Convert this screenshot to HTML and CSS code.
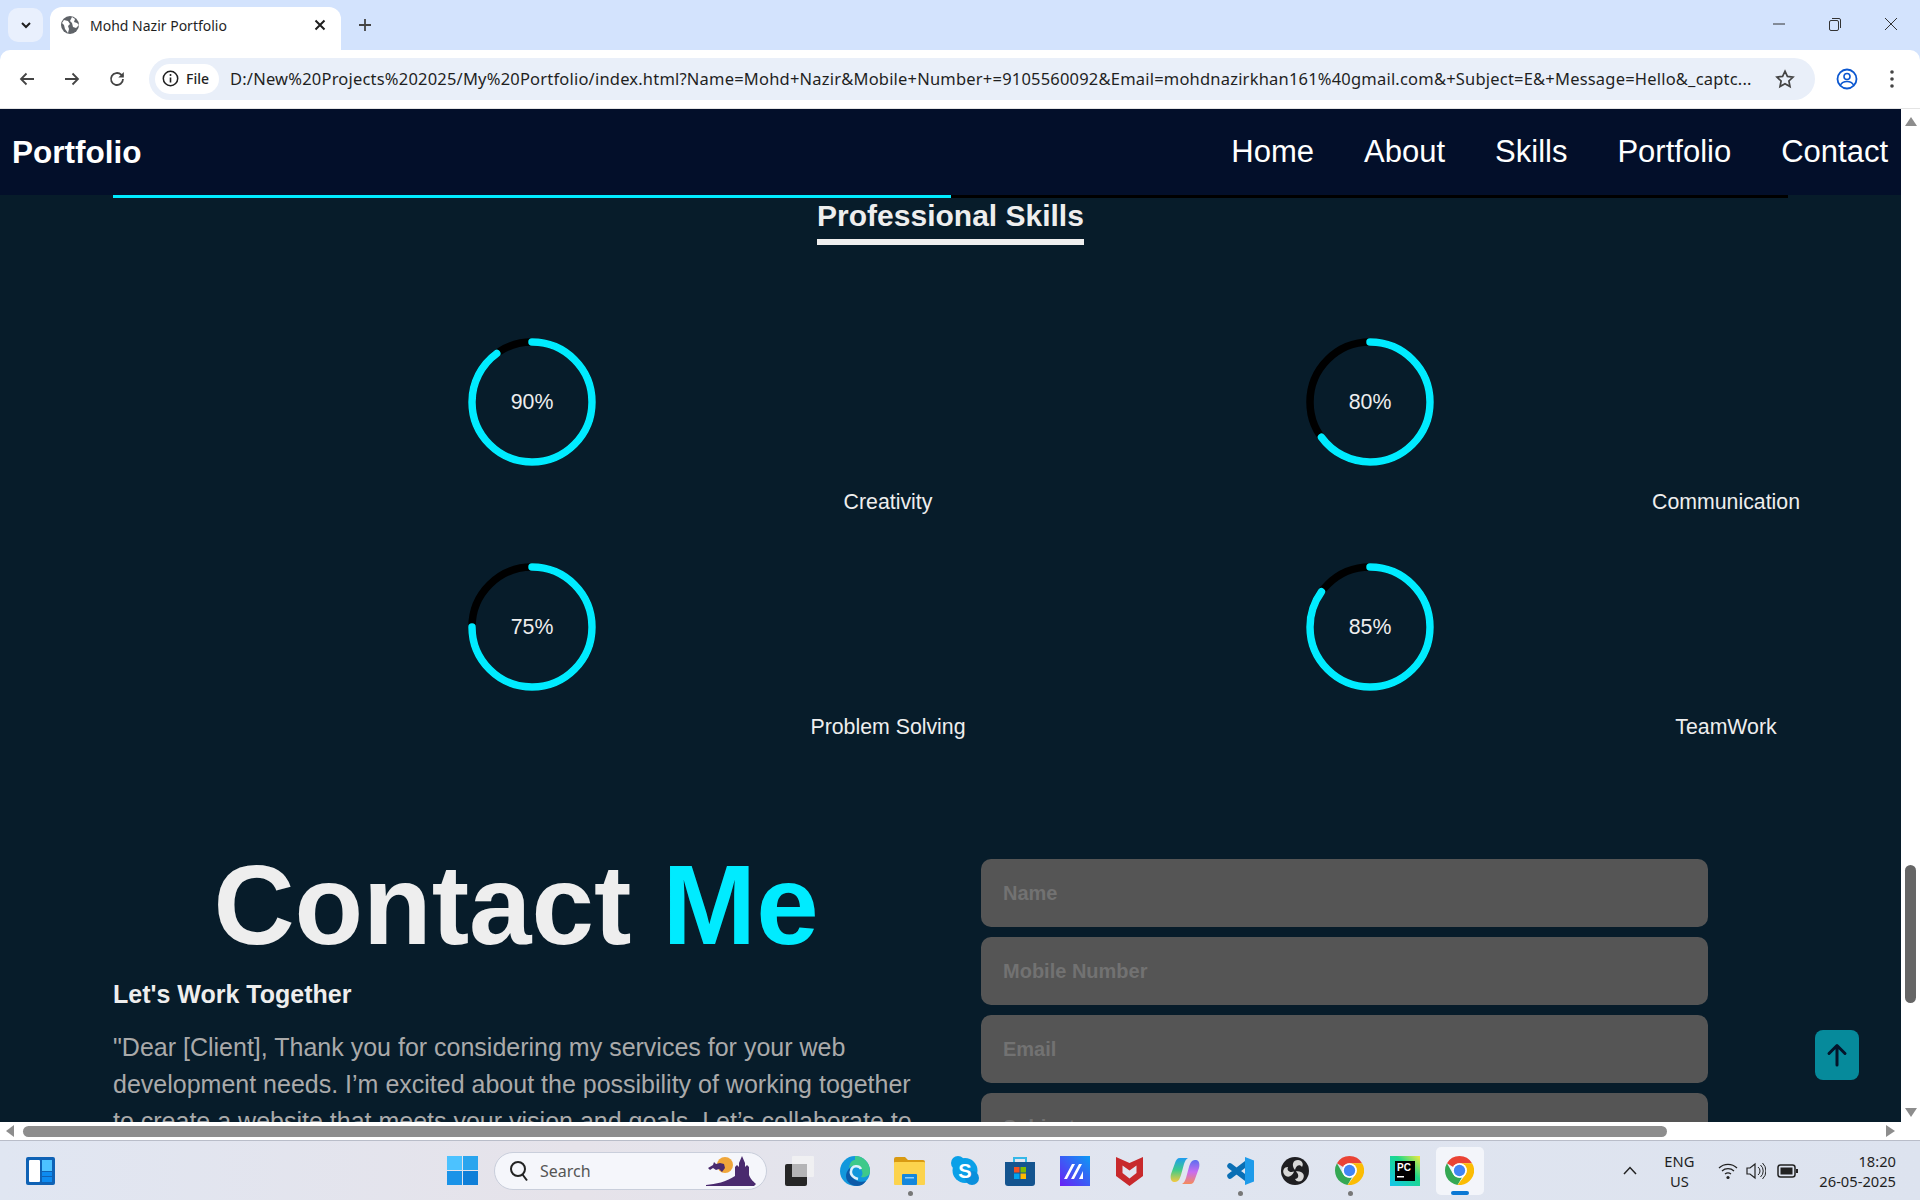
FILE: index.html
```html
<!DOCTYPE html>
<html lang="en">
<head>
    <meta charset="UTF-8">
    <title>Mohd Nazir Portfolio</title>
    <link rel="stylesheet" href="styles.css">
</head>
<body>
    <svg class="defs" width="0" height="0">
        <symbol id="chrome" viewBox="0 0 24 24">
            <path fill="#ea4335" d="M12 0A12 12 0 0 1 22.39 6H12A6 6 0 0 0 6.8 9L1.61 6A12 12 0 0 1 12 0Z"/>
            <path fill="#34a853" d="M1.61 6L6.8 15A6 6 0 0 0 14 17.7L10.4 23.9A12 12 0 0 1 1.61 6Z"/>
            <path fill="#fbbc04" d="M22.39 6H12A6 6 0 0 1 17.2 15L10.4 23.9A12 12 0 0 0 22.39 6Z"/>
            <circle cx="12" cy="12" r="6" fill="#fff"/>
            <circle cx="12" cy="12" r="4.7" fill="#4285f4"/>
        </symbol>
    </svg>

    <!-- browser tabs -->
    <div class="tabstrip">
        <div class="tab-menu">
            <svg width="14" height="14" viewBox="0 0 14 14"><path d="M3 5l4 4 4-4" fill="none" stroke="#1f1f1f" stroke-width="2"/></svg>
        </div>
        <div class="tab">
            <svg width="20" height="20" viewBox="0 0 20 20"><circle cx="10" cy="10" r="9" fill="#5f6368"/><path d="M4 5l4 1 2 3-2 2 1 3-1 4-3-4-1-4-2-2zM12 2l3 2-1 3 3 1 2 2-3 3-3-1-1-4-2-2z" fill="#fff"/></svg>
            <span class="tab-title">Mohd Nazir Portfolio</span>
            <svg class="tab-close" width="14" height="14" viewBox="0 0 14 14"><path d="M2.5 2.5l9 9M11.5 2.5l-9 9" stroke="#1f1f1f" stroke-width="2"/></svg>
        </div>
        <svg class="tab-new" width="16" height="16" viewBox="0 0 16 16"><path d="M8 2v12M2 8h12" stroke="#444" stroke-width="1.8"/></svg>
        <div class="win-controls">
            <svg width="14" height="14" viewBox="0 0 14 14"><path d="M1 7h12" stroke="#333" stroke-width="1"/></svg>
            <svg width="14" height="14" viewBox="0 0 14 14"><rect x="1.5" y="3.5" width="9" height="10" rx="1.5" fill="none" stroke="#333"/><path d="M4 1.5h7a1.5 1.5 0 0 1 1.5 1.5v8" fill="none" stroke="#333"/></svg>
            <svg width="14" height="14" viewBox="0 0 14 14"><path d="M1 1l12 12M13 1L1 13" stroke="#333" stroke-width="1"/></svg>
        </div>
    </div>

    <!-- address bar -->
    <div class="toolbar">
        <svg class="tool tool-back" width="18" height="18" viewBox="0 0 18 18"><path d="M16 9H3M8.500 3.500L3 9l5.500 5.500" fill="none" stroke="#444" stroke-width="1.800"/></svg>
        <svg class="tool tool-fwd" width="18" height="18" viewBox="0 0 18 18"><path d="M2 9h13M9.500 3.500L15 9l-5.500 5.500" fill="none" stroke="#444" stroke-width="1.800"/></svg>
        <svg class="tool tool-reload" width="18" height="18" viewBox="0 0 18 18"><path d="M15 9a6 6 0 1 1-1.800-4.300L15 6.500" fill="none" stroke="#444" stroke-width="1.800"/><path d="M15.800 2v5.500h-5.500z" fill="#444"/></svg>
        <div class="omnibox">
            <div class="chip">
                <svg width="17" height="17" viewBox="0 0 17 17"><circle cx="8.500" cy="8.500" r="7.200" fill="none" stroke="#1f1f1f" stroke-width="1.500"/><path d="M8.500 7.500v5" stroke="#1f1f1f" stroke-width="1.600"/><circle cx="8.500" cy="5" r="1" fill="#1f1f1f"/></svg>
                <span>File</span>
            </div>
            <span class="url">D:/New%20Projects%202025/My%20Portfolio/index.html?Name=Mohd+Nazir&amp;Mobile+Number+=9105560092&amp;Email=mohdnazirkhan161%40gmail.com&amp;+Subject=E&amp;+Message=Hello&amp;_captc...</span>
            <svg class="star" width="20" height="20" viewBox="0 0 20 20"><path d="M10 2.200l2.400 5.200 5.600.7-4.100 3.900 1.100 5.600-5-2.800-5 2.800 1.100-5.600L2 8.100l5.600-.7z" fill="none" stroke="#444" stroke-width="1.700"/></svg>
        </div>
        <svg class="tool-profile" width="22" height="22" viewBox="0 0 22 22"><circle cx="11" cy="11" r="9.500" fill="none" stroke="#0b57d0" stroke-width="1.800"/><circle cx="11" cy="8.500" r="3" fill="none" stroke="#0b57d0" stroke-width="1.600"/><path d="M4.500 17c1.500-3 3.500-3.500 6.500-3.500s5 .5 6.500 3.500" fill="none" stroke="#0b57d0" stroke-width="1.600"/></svg>
        <svg class="tool-more" width="6" height="20" viewBox="0 0 6 20"><circle cx="3" cy="3" r="1.800" fill="#444"/><circle cx="3" cy="10" r="1.800" fill="#444"/><circle cx="3" cy="17" r="1.800" fill="#444"/></svg>
    </div>

    <div class="viewport">
        <div class="page">
            <nav class="navbar">
                <a class="brand" href="#">Portfolio</a>
                <div class="nav-links">
                    <a href="#">Home</a>
                    <a href="#">About</a>
                    <a href="#">Skills</a>
                    <a href="#">Portfolio</a>
                    <a href="#">Contact</a>
                </div>
            </nav>

            <div class="skill-track"><div class="skill-fill"></div></div>

            <section class="skills">
                <div class="skills-head"><h2>Professional Skills</h2></div>
                <div class="skills-grid">
                    <div class="skill">
                        <div class="ring">
                            <svg width="128" height="128" viewBox="0 0 128 128"><circle class="ring-bg" cx="64" cy="64" r="60"/><circle class="ring-val" cx="64" cy="64" r="60" pathLength="100" stroke-dasharray="90 100"/></svg>
                            <span>90%</span>
                        </div>
                        <p>Creativity</p>
                    </div>
                    <div class="skill">
                        <div class="ring">
                            <svg width="128" height="128" viewBox="0 0 128 128"><circle class="ring-bg" cx="64" cy="64" r="60"/><circle class="ring-val" cx="64" cy="64" r="60" pathLength="100" stroke-dasharray="65 100"/></svg>
                            <span>80%</span>
                        </div>
                        <p>Communication</p>
                    </div>
                    <div class="skill">
                        <div class="ring">
                            <svg width="128" height="128" viewBox="0 0 128 128"><circle class="ring-bg" cx="64" cy="64" r="60"/><circle class="ring-val" cx="64" cy="64" r="60" pathLength="100" stroke-dasharray="75 100"/></svg>
                            <span>75%</span>
                        </div>
                        <p>Problem Solving</p>
                    </div>
                    <div class="skill">
                        <div class="ring">
                            <svg width="128" height="128" viewBox="0 0 128 128"><circle class="ring-bg" cx="64" cy="64" r="60"/><circle class="ring-val" cx="64" cy="64" r="60" pathLength="100" stroke-dasharray="85 100"/></svg>
                            <span>85%</span>
                        </div>
                        <p>TeamWork</p>
                    </div>
                </div>
            </section>

            <section class="contact">
                <div class="contact-text">
                    <h1>Contact <span>Me</span></h1>
                    <h3>Let's Work Together</h3>
                    <p>"Dear [Client], Thank you for considering my services for your web development needs. I’m excited about the possibility of working together to create a website that meets your vision and goals. Let’s collaborate to</p>
                </div>
                <form class="contact-form">
                    <input type="text" placeholder="Name">
                    <input type="text" placeholder="Mobile Number">
                    <input type="text" placeholder="Email">
                    <input type="text" placeholder="Subject">
                </form>
            </section>

            <a class="to-top" href="#">
                <svg width="22" height="24" viewBox="0 0 22 24"><path d="M11 22V3M3 10.500L11 2.500l8 8" fill="none" stroke="#04142a" stroke-width="3" stroke-linecap="round" stroke-linejoin="round"/></svg>
            </a>
        </div>
        <div class="vscroll">
            <i class="arrow-up"></i>
            <div class="vscroll-track"><div class="vscroll-thumb"></div></div>
            <i class="arrow-down"></i>
        </div>
    </div>

    <div class="hscroll">
        <i class="arrow-left"></i>
        <div class="hscroll-thumb"></div>
        <i class="arrow-right"></i>
    </div>

    <!-- windows taskbar -->
    <footer class="taskbar">
        <svg class="widgets" width="29" height="28" viewBox="0 0 29 28"><rect width="29" height="28" rx="2" fill="#0f62b5"/><rect x="3" y="3" width="11" height="22" rx="1" fill="#fff"/><rect x="16" y="3" width="10" height="11" fill="#4cc2ff"/><rect x="16" y="15" width="10" height="4" fill="#0d8bf0"/><rect x="16" y="20" width="10" height="5" fill="#0d8bf0"/></svg>

        <div class="task-center">
            <div class="slot">
                <svg width="31" height="29" viewBox="0 0 31 29"><rect width="15" height="14" fill="#4cc2ff"/><rect x="16" width="15" height="14" fill="#2aa5ee"/><rect y="15" width="15" height="14" fill="#1a93e8"/><rect x="16" y="15" width="15" height="14" fill="#0f7fd8"/></svg>
            </div>
            <div class="search">
                <svg width="20" height="22" viewBox="0 0 20 22"><circle cx="9" cy="9" r="7" fill="none" stroke="#222" stroke-width="2"/><path d="M13.500 14.500l4.500 6" stroke="#222" stroke-width="2"/></svg>
                <span>Search</span>
                <svg width="50" height="31" viewBox="0 0 50 31"><circle cx="19" cy="10" r="8" fill="#f0a63a"/><path d="M2 13l5-3 1-3 2 2 4-1 4 1 1 4-3 4-3-3-3 1-3-2-3 2z" fill="#4a2a6e"/><path d="M0 30C10 29 20 27 29 21V12l2-2 2 2V8l3-7 3 7v4l2-2 2 2v8C45 25 48 27 50 29l-2 2H0z" fill="#4a2a6e"/></svg>
            </div>
            <div class="slot">
                <svg width="30" height="30" viewBox="0 0 30 30"><rect y="8" width="22" height="22" rx="2" fill="#262626"/><rect x="7" width="22" height="21" rx="1" fill="#f0f0f2"/><rect x="7" y="8" width="15" height="13" fill="#b4b4b6"/></svg>
            </div>
            <div class="slot">
                <svg width="30" height="30" viewBox="0 0 30 30"><circle cx="15" cy="15" r="15" fill="#1297dc"/><path d="M15 0a15 15 0 0 1 15 15c0 5-5 7-9 6 2-2 2-5 0-8-3-4-9-4-12-1C10 6 12 4 15 4z" fill="#3ec98a"/><path d="M10 12C6 15 4 22 9 27c2 2 5 3 8 3 4 0 7-2 9-5-5 2-12 0-14-5-1-3-1-5-2-8z" fill="#0c5aa8"/><path d="M21 13c-2-4-9-4-10 2-1 4 3 7 7 8" fill="none" stroke="#dff1fb" stroke-width="2.500"/></svg>
            </div>
            <div class="slot">
                <svg width="31" height="28" viewBox="0 0 31 28"><path d="M0 2a2 2 0 0 1 2-2h9l3 3h15a2 2 0 0 1 2 2v3H0z" fill="#d99a12"/><rect y="5" width="31" height="23" rx="1" fill="#fcd34d"/><rect x="8" y="17" width="15" height="11" rx="1" fill="#1487dc"/><rect x="11" y="20" width="9" height="1.500" fill="#8fd0f7"/></svg>
                <i class="dot"></i>
            </div>
            <div class="slot">
                <svg width="28" height="29" viewBox="0 0 28 29"><circle cx="14" cy="14.500" r="12.500" fill="#0aa0e8"/><circle cx="7" cy="7" r="7" fill="#0aa0e8"/><circle cx="21" cy="22" r="7" fill="#0a8fdc"/><text x="14" y="22" class="skype-s">S</text></svg>
            </div>
            <div class="slot">
                <svg width="30" height="30" viewBox="0 0 30 30"><path d="M9 6V2h12v4" fill="none" stroke="#35b8e8" stroke-width="2"/><path d="M0 6h30v21a3 3 0 0 1-3 3H3a3 3 0 0 1-3-3z" fill="#14548f"/><rect x="9" y="11" width="5.500" height="5.500" fill="#f25022"/><rect x="15.500" y="11" width="5.500" height="5.500" fill="#7fba00"/><rect x="9" y="17.500" width="5.500" height="5.500" fill="#00a4ef"/><rect x="15.500" y="17.500" width="5.500" height="5.500" fill="#ffb900"/></svg>
            </div>
            <div class="slot">
                <svg width="30" height="30" viewBox="0 0 30 30"><defs><linearGradient id="mblue" x1="0" y1="1" x2="1" y2="0"><stop offset="0" stop-color="#6a1ff5"/><stop offset="1" stop-color="#0c9af5"/></linearGradient></defs><rect width="30" height="30" fill="url(#mblue)"/><path d="M4 23L12 8h3L7 23zM11 23L19 8h3L14 23zM19 23l4-8v8z" fill="#fff"/></svg>
            </div>
            <div class="slot">
                <svg width="27" height="30" viewBox="0 0 27 30"><path fill-rule="evenodd" d="M0 1L13.500 7 27 1V20L13.500 30 0 20ZM6.500 9.500L13.500 14.500 20.500 9.500V17L13.500 22.500 6.500 17Z" fill="#c8292c"/></svg>
            </div>
            <div class="slot">
                <svg width="30" height="30" viewBox="0 0 30 30"><defs><linearGradient id="copa" x1="0" y1="0" x2="0" y2="1"><stop offset="0" stop-color="#1f9cf0"/><stop offset=".5" stop-color="#3ecb8a"/><stop offset="1" stop-color="#f5c93f"/></linearGradient><linearGradient id="copb" x1="0" y1="0" x2="0" y2="1"><stop offset="0" stop-color="#5a6ef0"/><stop offset=".5" stop-color="#c86cf0"/><stop offset="1" stop-color="#f58a5a"/></linearGradient></defs><path d="M10 2h8c-2 1-3 3-4 6l-3 11c-1 3-2 7-6 7H4C1 26 0 22 1 18L5 7c1-3 2-5 5-5z" fill="url(#copa)"/><path d="M20 28h-8c2-1 3-3 4-6l3-11c1-3 2-7 6-7h1c3 0 4 4 3 8l-4 11c-1 3-2 5-5 5z" fill="url(#copb)"/></svg>
            </div>
            <div class="slot">
                <svg width="29" height="30" viewBox="0 0 29 30"><path d="M22 7L5 20M5 10l17 13" fill="none" stroke="#0a6fb5" stroke-width="5.500" stroke-linecap="round"/><path d="M20 1l9 3.500v21L20 29z" fill="#1e9bea"/></svg>
                <i class="dot"></i>
            </div>
            <div class="slot">
                <svg width="28" height="30" viewBox="0 0 28 30"><circle cx="14" cy="15" r="14" fill="#1f1f22"/><g fill="#d8d8d8"><path id="obs-blade" d="M14 14C10 9 12 4 17 4c4 0 6 4 4 7-2-3-6-2-7 3z"/><use href="#obs-blade" transform="rotate(120 14 15)"/><use href="#obs-blade" transform="rotate(240 14 15)"/></g></svg>
            </div>
            <div class="slot">
                <svg width="29" height="29"><use href="#chrome"/></svg>
                <i class="dot"></i>
            </div>
            <div class="slot">
                <svg width="30" height="30" viewBox="0 0 30 30"><defs><linearGradient id="pc" x1="0" y1="1" x2="1" y2="0"><stop offset="0" stop-color="#12c5ee"/><stop offset=".6" stop-color="#1cd88a"/><stop offset="1" stop-color="#f5ea3c"/></linearGradient></defs><rect width="30" height="30" fill="url(#pc)"/><rect x="5" y="5" width="20" height="20" fill="#000"/><text x="7" y="15" class="pc-text">PC</text><rect x="7" y="20" width="7" height="1.500" fill="#fff"/></svg>
            </div>
            <div class="slot">
                <div class="active-bg">
                    <svg width="29" height="29"><use href="#chrome"/></svg>
                    <i class="active-bar"></i>
                </div>
            </div>
        </div>

        <div class="tray">
            <svg width="14" height="9" viewBox="0 0 14 9"><path d="M1 8l6-6.500L13 8" fill="none" stroke="#222" stroke-width="1.500"/></svg>
            <div class="lang">ENG<br>US</div>
            <svg class="tray-wifi" width="20" height="18" viewBox="0 0 20 18"><path d="M1 6a13 13 0 0 1 18 0M4 9a9 9 0 0 1 12 0M7 12a5 5 0 0 1 6 0" fill="none" stroke="#222" stroke-width="1.300"/><circle cx="10" cy="15.500" r="1.600" fill="#222"/></svg>
            <svg width="20" height="20" viewBox="0 0 20 20"><path d="M1 7h3l5-4v14l-5-4H1z" fill="none" stroke="#222" stroke-width="1.200"/><path d="M12 6a5 5 0 0 1 0 8M14.500 4a8 8 0 0 1 0 12M16.500 2a11 11 0 0 1 0 16" fill="none" stroke="#222" stroke-width="1"/></svg>
            <svg width="21" height="14" viewBox="0 0 21 14"><rect x="1" y="1" width="17" height="12" rx="2.500" fill="none" stroke="#222" stroke-width="1.500"/><rect x="3.500" y="3.500" width="12" height="7" fill="#222"/><rect x="19" y="5" width="2" height="4" fill="#222"/></svg>
            <div class="clock">18:20<br>26-05-2025</div>
        </div>
    </footer>
</body>
</html>
```

FILE: styles.css
```css
/* Reset */
* {
    margin: 0;
    padding: 0;
    box-sizing: border-box;
}

html, body {
    height: 100%;
    overflow: hidden;
}

body {
    display: flex;
    flex-direction: column;
    font-family: "Liberation Sans", Arial, sans-serif;
    background-color: #d3e3fd;
}

.defs {
    position: absolute;
}

/* Browser tabs */
.tabstrip {
    display: flex;
    align-items: flex-end;
    height: 50px;
    flex-shrink: 0;
    padding-left: 8px;
    position: relative;
}

.tab-menu {
    display: flex;
    align-items: center;
    justify-content: center;
    width: 35px;
    height: 34px;
    margin-bottom: 8px;
    margin-right: 7px;
    background-color: #e9f0fd;
    border-radius: 10px;
}

.tab {
    display: flex;
    align-items: center;
    width: 291px;
    height: 43px;
    padding: 0 14px 7px 10px;
    background-color: #fff;
    border-radius: 12px 12px 0 0;
    font-family: "Noto Sans", sans-serif;
    font-size: 14px;
    color: #1f1f1f;
}

.tab-title {
    margin-left: 10px;
    flex: 1;
}

.tab-new {
    margin: 0 0 17px 16px;
}

.win-controls {
    position: absolute;
    top: 17px;
    right: 22px;
    display: flex;
    gap: 42px;
}

/* Address bar */
.toolbar {
    display: flex;
    align-items: center;
    height: 59px;
    flex-shrink: 0;
    padding: 0 25px 1px 18px;
    background-color: #fff;
    border-radius: 10px 10px 0 0;
    border-bottom: 1px solid #e4e4e4;
}

.tool {
    margin-right: 27px;
    flex-shrink: 0;
}

.tool-reload {
    margin-right: 23px;
}

.omnibox {
    display: flex;
    align-items: center;
    flex: 1;
    height: 42px;
    padding: 0 20px 0 6px;
    margin-right: 21px;
    background-color: #e9eff9;
    border-radius: 21px;
}

.chip {
    display: flex;
    align-items: center;
    gap: 7px;
    height: 30px;
    width: 64px;
    padding-left: 7px;
    background-color: #fff;
    border-radius: 15px;
    font-family: "Noto Sans", sans-serif;
    font-size: 14px;
    font-weight: 500;
    color: #1f1f1f;
}

.url {
    flex: 1;
    margin-left: 11px;
    font-family: "Noto Sans", sans-serif;
    font-size: 16.5px;
    letter-spacing: 0.2px;
    color: #1f1f1f;
    white-space: nowrap;
    overflow: hidden;
}

.tool-profile {
    margin-right: 31px;
}

/* The page inside the browser */
.viewport {
    display: flex;
    height: 1013px;
    flex-shrink: 0;
}

.page {
    position: relative;
    flex: 1;
    min-width: 0;
    overflow: hidden;
    background-color: #071c2a;
    color: #eee;
}

.navbar {
    display: flex;
    justify-content: space-between;
    align-items: center;
    height: 86px;
    padding: 0 13px 0 12px;
    background-color: #030f2a;
}

.navbar a {
    color: #fff;
    text-decoration: none;
    font-size: 31px;
}

.navbar .brand {
    font-size: 31.5px;
    font-weight: 700;
}

.nav-links {
    display: flex;
    gap: 50px;
}

.skill-track {
    height: 3px;
    margin: 0 113px;
    width: 1675px;
    background-color: #000;
}

.skill-fill {
    width: 50%;
    height: 100%;
    background-color: #00ebff;
}

.skills-head {
    width: 1675px;
    margin-left: 113px;
    text-align: center;
}

.skills-head h2 {
    display: inline-block;
    padding: 1px 0 6px;
    font-size: 30px;
    color: #eee;
    border-bottom: 6px solid #eee;
}

.skills-grid {
    display: grid;
    grid-template-columns: 838px 838px;
    row-gap: 49px;
    margin-top: 93px;
    margin-left: 468px;
}

.ring {
    position: relative;
    display: flex;
    align-items: center;
    justify-content: center;
    width: 128px;
    height: 128px;
}

.ring svg {
    position: absolute;
    top: 0;
    left: 0;
    transform: rotate(-90deg);
}

.ring-bg,
.ring-val {
    fill: none;
    stroke-width: 7.5;
}

.ring-bg {
    stroke: #000;
}

.ring-val {
    stroke: #00ebff;
    stroke-linecap: round;
}

.ring span {
    font-size: 21.3px;
}

.skill p {
    margin-top: 24px;
    padding-left: 2px;
    font-size: 21.3px;
    line-height: 24px;
    text-align: center;
    color: #eee;
}

.contact {
    display: grid;
    grid-template-columns: 806px 727px;
    column-gap: 62px;
    margin: 101px 0 0 113px;
}

.contact-text h1 {
    font-size: 112.3px;
    text-align: center;
    color: #eee;
}

.contact-text h1 span {
    color: #00ebff;
}

.contact-text h3 {
    margin-top: 10px;
    font-size: 25px;
    color: #eee;
}

.contact-text p {
    margin-top: 20px;
    font-size: 25px;
    line-height: 37px;
    color: #aaa;
}

.contact-form {
    display: flex;
    flex-direction: column;
    gap: 10px;
    padding-top: 19px;
}

.contact-form input {
    height: 68px;
    padding: 0 22px;
    border: none;
    border-radius: 10px;
    background-color: #555;
    font-family: inherit;
    font-size: 20px;
    font-weight: 700;
    color: #eee;
}

.contact-form input::placeholder {
    color: #727272;
}

.to-top {
    position: absolute;
    right: 42px;
    bottom: 42px;
    display: flex;
    align-items: center;
    justify-content: center;
    width: 44px;
    height: 50px;
    background-color: #068a9b;
    border-radius: 8px;
}

/* Scrollbars */
.vscroll {
    display: flex;
    flex-direction: column;
    align-items: center;
    width: 19px;
    background-color: #fff;
}

.arrow-up,
.arrow-down {
    width: 0;
    height: 0;
    border-left: 6px solid transparent;
    border-right: 6px solid transparent;
    flex-shrink: 0;
}

.arrow-up {
    margin-top: 8px;
    border-bottom: 9px solid #8d8d8d;
}

.arrow-down {
    margin-bottom: 5px;
    border-top: 9px solid #8d8d8d;
}

.vscroll-track {
    flex: 1;
    padding-top: 739px;
}

.vscroll-thumb {
    width: 11px;
    height: 138px;
    background-color: #666;
    border-radius: 6px;
}

.hscroll {
    display: flex;
    align-items: center;
    height: 18px;
    flex-shrink: 0;
    padding: 0 25px 0 6px;
    background-color: #fff;
}

.arrow-left,
.arrow-right {
    width: 0;
    height: 0;
    border-top: 6px solid transparent;
    border-bottom: 6px solid transparent;
}

.arrow-left {
    border-right: 8px solid #8d8d8d;
}

.arrow-right {
    margin-left: auto;
    border-left: 9px solid #8d8d8d;
}

.hscroll-thumb {
    width: 1644px;
    height: 11px;
    margin-left: 9px;
    background-color: #8d8d8d;
    border-radius: 6px;
}

/* Windows taskbar */
.taskbar {
    display: flex;
    align-items: center;
    height: 60px;
    flex-shrink: 0;
    padding: 0 24px 0 26px;
    background: linear-gradient(90deg, #e0e6f2, #e6e3ea 30%, #e0e5f0 60%, #dde3ef);
    border-top: 1px solid #b9bdc9;
    font-family: "Noto Sans", sans-serif;
    color: #1f1f1f;
}

.widgets {
    flex-shrink: 0;
}

.task-center {
    display: flex;
    align-items: center;
    margin-left: 380px;
}

.slot {
    position: relative;
    display: flex;
    align-items: center;
    justify-content: center;
    width: 55px;
    height: 48px;
}

.dot {
    position: absolute;
    left: 50%;
    bottom: -1px;
    width: 5px;
    height: 5px;
    margin-left: -2px;
    background-color: #777;
    border-radius: 50%;
}

.search {
    display: flex;
    align-items: center;
    width: 273px;
    height: 38px;
    margin: 0 5px 0 4px;
    padding: 0 10px 0 14px;
    background-color: #f5f6fb;
    border: 1px solid #c9cedb;
    border-radius: 19px;
    font-size: 16px;
    color: #555;
}

.search span {
    flex: 1;
    margin-left: 11px;
}

.active-bg {
    position: relative;
    display: flex;
    align-items: center;
    justify-content: center;
    width: 48px;
    height: 48px;
    background-color: #f3f5fa;
    border-radius: 5px;
}

.active-bar {
    position: absolute;
    bottom: 0;
    left: 15px;
    width: 18px;
    height: 4px;
    background-color: #0a78d4;
    border-radius: 2px;
}

.tray {
    display: flex;
    align-items: center;
    margin-left: auto;
    font-size: 14.7px;
    line-height: 20px;
    text-align: center;
}

.lang {
    margin: 0 24px 0 27px;
}

.tray svg {
    margin-right: 11px;
}

.tray svg:first-child {
    margin-right: 0;
}

.tray .tray-wifi {
    margin-right: 8px;
}

.clock {
    margin-left: 10px;
    text-align: right;
}

.skype-s {
    font-family: "Liberation Sans", sans-serif;
    font-size: 20px;
    font-weight: 700;
    fill: #fff;
    text-anchor: middle;
}

.pc-text {
    font-family: "Liberation Sans", sans-serif;
    font-size: 10px;
    font-weight: 700;
    fill: #fff;
}
```
